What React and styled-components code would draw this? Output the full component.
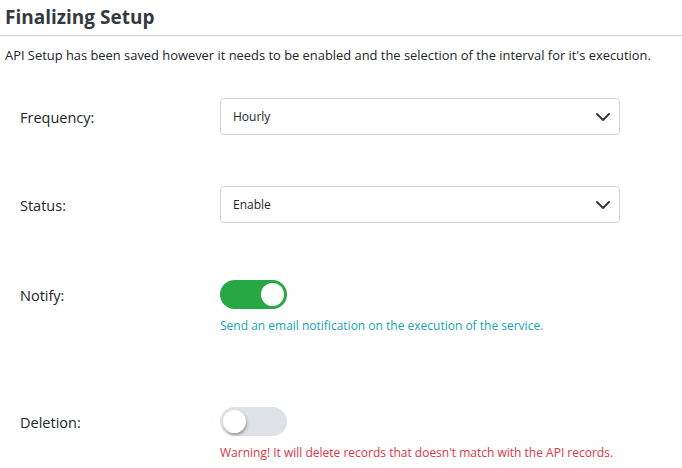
import React, { useState } from 'react'
import styled, { createGlobalStyle } from 'styled-components'

const GlobalStyle = createGlobalStyle`
  body {
    margin: 0;
    background: #fff;
    font-family: 'Open Sans', 'Noto Sans', sans-serif;
    color: #212529;
  }
`

const Page = styled.div`
  padding: 0 0 0 5px;
`

const Title = styled.h2`
  margin: 0;
  padding-top: 3px;
  font-size: 19px;
  font-weight: 700;
  color: #343a40;
  line-height: 28px;
`

const Rule = styled.hr`
  margin: 4px 0 0 -5px;
  border: 0;
  border-top: 1px solid #c8ced6;
`

const Lead = styled.p`
  margin: 11px 0 0;
  font-size: 12.9px;
  line-height: 16px;
  color: #212529;
`

const Form = styled.div`
  padding-left: 15px;
`

const Row = styled.div`
  display: grid;
  grid-template-columns: 200px 400px;
  align-items: start;
  margin-top: ${(p) => p.$top}px;
`

const Label = styled.label`
  font-size: 14.5px;
  color: #212529;
  line-height: ${(p) => p.$h}px;
  padding-top: 1px;
`

const SelectBox = styled.div`
  position: relative;
  height: 37px;
  box-sizing: border-box;
  border: 1px solid #ced4da;
  border-radius: 4px;
  display: flex;
  align-items: center;
  padding: 0 12px;
  font-size: 12px;
  color: #212529;
`

const Chevron = styled.svg`
  position: absolute;
  right: 8px;
  top: 50%;
  margin-top: -5px;
`

const Field = styled.div`
  display: flex;
  flex-direction: column;
`

const Track = styled.button`
  width: 67px;
  height: 29px;
  border-radius: 15px;
  border: 0;
  padding: 0;
  position: relative;
  cursor: pointer;
  background: ${(p) => (p.$on ? '#28a745' : '#dee2e6')};
`

const Knob = styled.span`
  position: absolute;
  top: 3px;
  left: ${(p) => (p.$on ? '41px' : '3px')};
  width: 23px;
  height: 23px;
  border-radius: 50%;
  background: #fff;
  box-shadow: ${(p) => (p.$on ? 'none' : '1px 2px 3px rgba(0,0,0,0.3)')};
`

const Help = styled.small`
  margin-top: 9px;
  font-size: 12px;
  line-height: 16px;
  color: ${(p) => p.$color};
`

const Select = ({ value }) => (
  <SelectBox>
    {value}
    <Chevron width="16" height="10" viewBox="0 0 16 10">
      <path d="M2 2l6 6 6-6" fill="none" stroke="#343a40" strokeWidth="2" strokeLinecap="round" strokeLinejoin="round" />
    </Chevron>
  </SelectBox>
)

const Toggle = ({ on, onClick }) => (
  <Track $on={on} onClick={onClick}>
    <Knob $on={on} />
  </Track>
)

export default function App() {
  const [notify, setNotify] = useState(true)
  const [del, setDel] = useState(false)
  return (
    <Page>
      <GlobalStyle />
      <Title>Finalizing Setup</Title>
      <Rule />
      <Lead>API Setup has been saved however it needs to be enabled and the selection of the interval for it's execution.</Lead>
      <Form>
        <Row $top={35}>
          <Label $h={37}>Frequency:</Label>
          <Select value="Hourly" />
        </Row>
        <Row $top={50}>
          <Label $h={37}>Status:</Label>
          <Select value="Enable" />
        </Row>
        <Row $top={56}>
          <Label $h={29}>Notify:</Label>
          <Field>
            <Toggle on={notify} onClick={() => setNotify(!notify)} />
            <Help $color="#17a2b8">Send an email notification on the execution of the service.</Help>
          </Field>
        </Row>
        <Row $top={73}>
          <Label $h={29}>Deletion:</Label>
          <Field>
            <Toggle on={del} onClick={() => setDel(!del)} />
            <Help $color="#dc3545">Warning! It will delete records that doesn't match with the API records.</Help>
          </Field>
        </Row>
      </Form>
    </Page>
  )
}
